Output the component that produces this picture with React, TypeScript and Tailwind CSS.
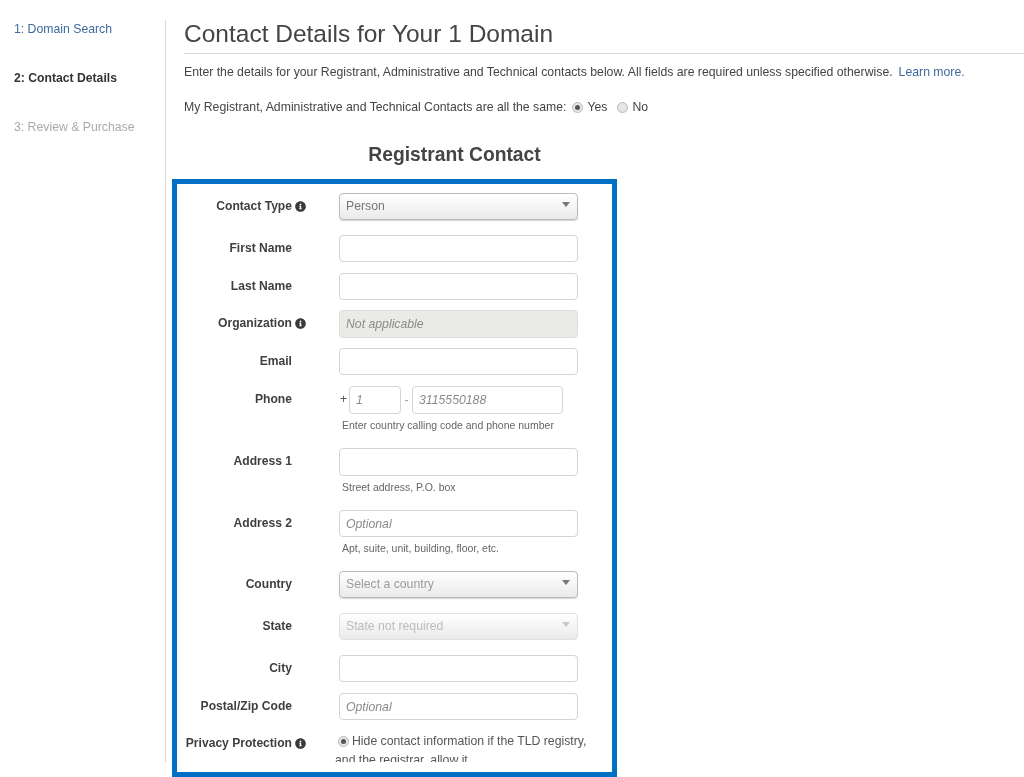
import React from "react";
import { FaInfoCircle } from "react-icons/fa";

const fieldCls =
  "block rounded-[4px] border px-[6px] text-[12.25px] italic text-[#666] outline-none placeholder:text-[#8a8a8a] placeholder:italic";
const plain = `${fieldCls} w-[239px] h-[27px] border-[#d4d4d4] bg-white`;
const plainTall = `${fieldCls} w-[239px] h-[28px] border-[#d4d4d4] bg-white`;

function Label({ text, info }: { text: string; info?: boolean }) {
  return (
    <div className={`w-[129px] shrink-0 flex justify-end items-center gap-[3px] h-[26px] text-[12.1px] font-bold text-[#3f3f3f] whitespace-nowrap ${info ? "" : "pr-[14px]"}`}>
      <span>{text}</span>
      {info && <FaInfoCircle className="w-[11px] h-[11px] text-[#3a3a3a]" />}
    </div>
  );
}

function Row({ label, info, className, children }: { label: string; info?: boolean; className?: string; children: React.ReactNode }) {
  return (
    <div className={`flex items-start ${className ?? ""}`}>
      <Label text={label} info={info} />
      <div className="ml-[33px]">{children}</div>
    </div>
  );
}

function Select({ text, disabled, muted }: { text: string; disabled?: boolean; muted?: boolean }) {
  return (
    <div
      className={`flex items-center justify-between w-[239px] h-[27px] rounded-[4px] border bg-linear-to-b from-white to-[#eaeaea] pl-[6px] pr-[7px] text-[12.25px] ${
        disabled
          ? "border-[#e0e0e0] text-[#bcbcbc]"
          : muted
            ? "border-[#bbbbbb] shadow-[0_1px_1px_#d4d4d4] text-[#9c9c9c]"
            : "border-[#bbbbbb] shadow-[0_1px_1px_#d4d4d4] text-[#777]"
      }`}
    >
      <span>{text}</span>
      <svg width="8" height="5" viewBox="0 0 8 5" className="mb-[5px]">
        <path d="M0 0h8L4 5z" fill={disabled ? "#c8c8c8" : "#777"} />
      </svg>
    </div>
  );
}

function Radio({ on, className }: { on?: boolean; className?: string }) {
  return (
    <span className={`inline-flex items-center justify-center w-[11px] h-[11px] rounded-full border border-[#bbb] bg-[#e6e6e6] ${className ?? ""}`}>
      {on && <span className="block w-[5px] h-[5px] rounded-full bg-[#555]" />}
    </span>
  );
}

function Hint({ children }: { children: React.ReactNode }) {
  return <div className="mt-[5px] ml-[3px] h-[13px] leading-[13px] text-[10.5px] text-[#666] whitespace-nowrap">{children}</div>;
}

export default function App() {
  return (
    <div className="flex h-[777px] w-[1024px] overflow-hidden bg-white text-[12.25px] text-[#444] blur-[0.35px] font-['Liberation_Sans',Arial,sans-serif]">
      <aside className="w-[166px] shrink-0 mt-[20px] h-[742px] border-r border-[#d9d9d9] pl-[14px] pt-[1px] text-[12.25px]">
        <div className="h-[16px] leading-[16px] text-[#3e6a9e]">1: Domain Search</div>
        <div className="mt-[33px] h-[16px] leading-[16px] font-bold text-[12.2px] text-[#333]">2: Contact Details</div>
        <div className="mt-[33px] h-[16px] leading-[16px] text-[#aaa]">3: Review &amp; Purchase</div>
      </aside>

      <main className="flex-1 min-w-0">
        <div className="pl-[18px]">
          <h1 className="mt-[18px] h-[36px] border-b border-[#d5d5d5] text-[24.5px] leading-[32px] font-normal text-[#444] whitespace-nowrap">
            Contact Details for Your 1 Domain
          </h1>
          <p className="mt-[10px] h-[16px] leading-[16px] whitespace-nowrap">
            Enter the details for your Registrant, Administrative and Technical contacts below. All fields are required unless specified otherwise.
            <a className="ml-[6px] text-[#3e6a9e]">Learn more.</a>
          </p>
          <div className="mt-[19px] h-[16px] leading-[16px] whitespace-nowrap flex items-center">
            <span>My Registrant, Administrative and Technical Contacts are all the same:</span>
            <span className="ml-[6px] flex"><Radio on /></span>
            <span className="ml-[4px]">Yes</span>
            <span className="ml-[10px] flex"><Radio /></span>
            <span className="ml-[4px]">No</span>
          </div>
          <h2 className="mt-[28px] w-[541px] h-[24px] leading-[24px] text-center text-[19.3px] font-bold text-[#444]">Registrant Contact</h2>
        </div>

        <section className="mt-[12px] ml-[6px] w-[445px] h-[598px] border-[5px] border-[#0070c4] box-border pt-[9px] overflow-hidden">
          <Row label="Contact Type" info><Select text="Person" /></Row>
          <Row label="First Name" className="mt-[15px]"><input readOnly className={plain} /></Row>
          <Row label="Last Name" className="mt-[11px]"><input readOnly className={plain} /></Row>
          <Row label="Organization" info className="mt-[10px]">
            <input readOnly placeholder="Not applicable" className={`${fieldCls} w-[239px] h-[28px] bg-[#eaeae6] border-[#dededa]`} />
          </Row>
          <Row label="Email" className="mt-[10px]"><input readOnly className={plain} /></Row>
          <Row label="Phone" className="mt-[11px]">
            <div className="flex items-center h-[28px]">
              <span className="w-[10px] pl-[1px] mb-[2px] text-[#555] text-[12px]">+</span>
              <input readOnly placeholder="1" className={`${fieldCls} w-[52px] h-[28px] border-[#d4d4d4] bg-white`} />
              <span className="w-[11px] text-center text-[#999]">-</span>
              <input readOnly placeholder="3115550188" className={`${fieldCls} w-[151px] h-[28px] border-[#d4d4d4] bg-white`} />
            </div>
            <Hint>Enter country calling code and phone number</Hint>
          </Row>
          <Row label="Address 1" className="mt-[16px]">
            <input readOnly className={plainTall} />
            <Hint>Street address, P.O. box</Hint>
          </Row>
          <Row label="Address 2" className="mt-[16px]">
            <input readOnly placeholder="Optional" className={plain} />
            <Hint>Apt, suite, unit, building, floor, etc.</Hint>
          </Row>
          <Row label="Country" className="mt-[16px]"><Select text="Select a country" muted /></Row>
          <Row label="State" className="mt-[15px]"><Select text="State not required" disabled /></Row>
          <Row label="City" className="mt-[15px]"><input readOnly className={plain} /></Row>
          <Row label="Postal/Zip Code" className="mt-[11px]"><input readOnly placeholder="Optional" className={plain} /></Row>
          <div className="flex items-start mt-[10px]">
            <Label text="Privacy Protection" info />
            <div className="ml-[29px] mt-[2px] w-[262px] h-[30px] overflow-hidden leading-[19px] text-[12.25px] text-[#555]">
              <Radio on className="ml-[3px] mr-[3px] align-[1px]" />
              Hide contact information if the TLD registry, and the registrar, allow it
            </div>
          </div>
        </section>
      </main>
    </div>
  );
}
